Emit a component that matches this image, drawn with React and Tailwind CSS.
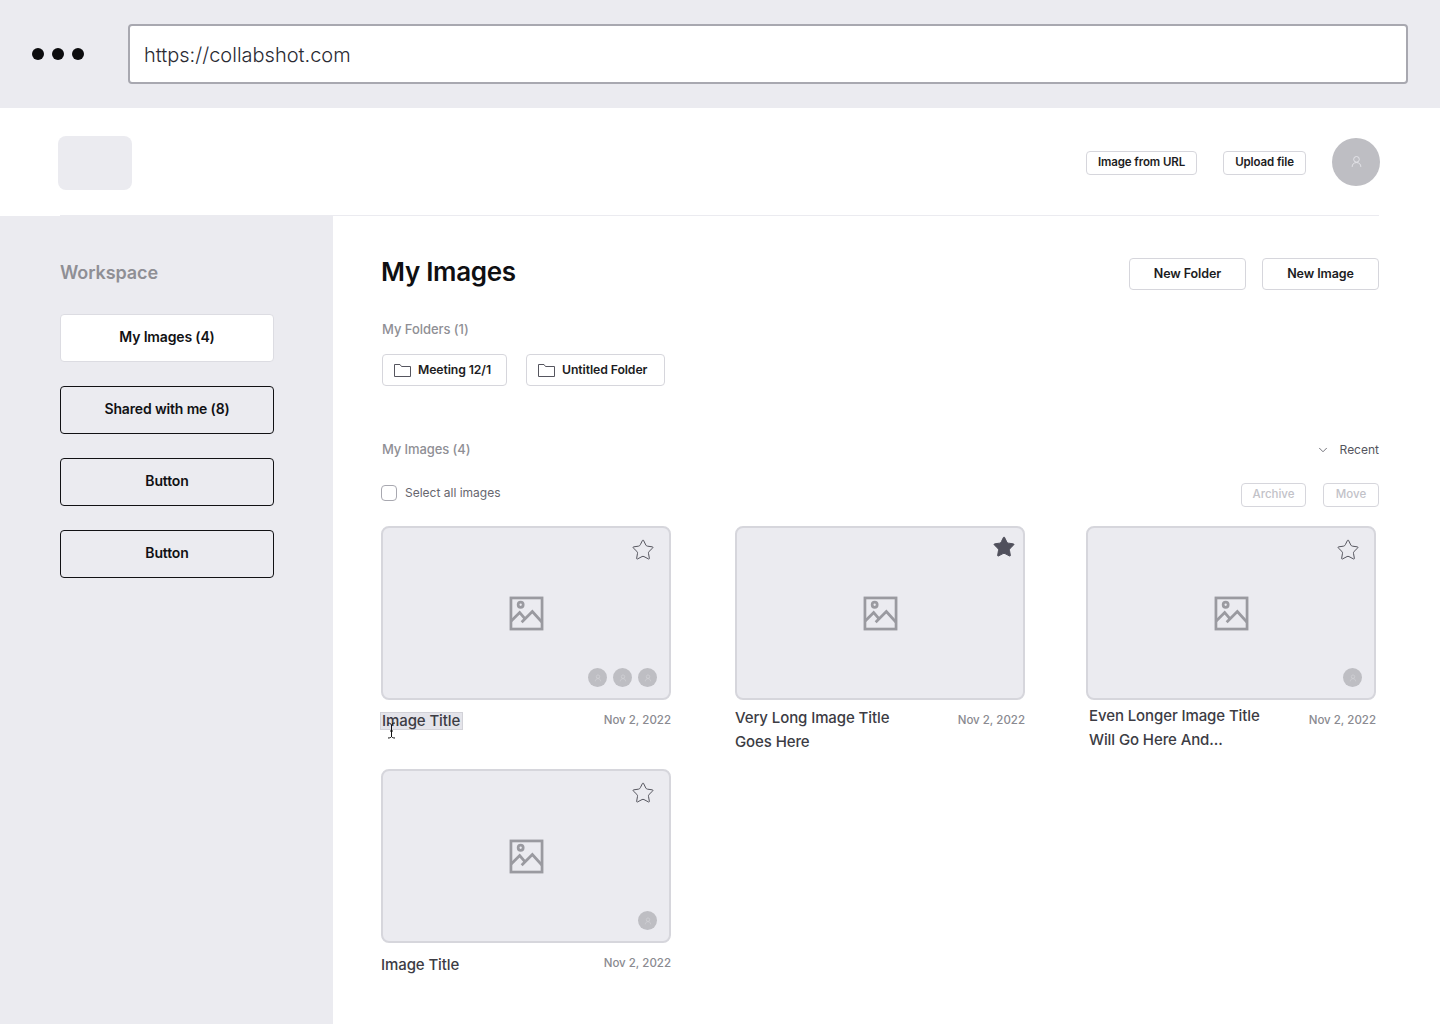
import { ChevronDown, Star } from "lucide-react";

const font = { fontFamily: "Inter, Lato, sans-serif" };

function ImageIcon() {
  return (
    <svg className="mt-[1px] ml-[1px]" width="35" height="35" viewBox="0 0 36 36" fill="none" stroke="#9a9aa0" strokeWidth="2.8">
      <rect x="2" y="2" width="32" height="32" />
      <circle cx="12" cy="9" r="2.600" />
      <path d="M2 26l9-9 6 7M13 27l11-11 10 11" />
    </svg>
  );
}

function FolderIcon() {
  return (
    <svg width="17" height="13" viewBox="0 0 17 13" fill="none" stroke="#55555e" strokeWidth="1">
      <path d="M.5.5h5.500l1.500 2h9v10H.5z" />
    </svg>
  );
}

function UserIcon({ size, color }) {
  return (
    <svg width={size} height={size} viewBox="0 0 12 12" fill="none" stroke={color} strokeWidth="0.8">
      <circle cx="6" cy="4" r="2.600" />
      <path d="M2 11c0-2.500 1.500-4 4-4s4 1.500 4 4" />
    </svg>
  );
}

function SideButton({ children, active }) {
  return (
    <button
      className={`h-12 w-[214px] rounded pb-[4px] text-[14px] font-semibold tracking-[-0.15px] text-[#111114] ${
        active ? "border border-[#dcdce2] bg-white" : "border border-[#111114]"
      }`}
    >
      {children}
    </button>
  );
}

function Card({ title, selected, starred, avatars, offset }) {
  return (
    <div className="w-[290px]">
      <div className="relative flex h-[174px] items-center justify-center rounded-lg border-2 border-[#d6d6dc] bg-[#ebebf0]">
        <ImageIcon />
        {starred ? (
          <Star size={24} className="absolute top-[7px] right-[7px]" fill="#50505c" stroke="#50505c" strokeWidth={1} />
        ) : (
          <Star size={24} className="absolute top-[10px] right-[14px]" stroke="#55555e" strokeWidth={1} />
        )}
        <div className="absolute right-[12px] bottom-[11px] flex gap-[6px]">
          {Array.from({ length: avatars }).map((_, i) => (
            <div key={i} className="flex h-[19px] w-[19px] items-center justify-center rounded-full bg-[#bebec3]">
              <UserIcon size={8} color="#d8d8dc" />
            </div>
          ))}
        </div>
      </div>
      <div className="flex items-start justify-between">
        <div className={`w-[190px] text-[15px] leading-6 font-medium tracking-[-0.1px] text-[#3c3c44] ${offset}`}>
          {selected ? (
            <span className="relative -ml-px inline-block h-[18px] border border-[#d2d2d8] bg-[#e4e4ea] pr-[2px] pl-px leading-[16px]">
              {title}
              <svg className="absolute top-[9px] left-[6px]" width="9" height="18" viewBox="0 0 9 18" fill="none" stroke="#111" strokeWidth="1">
                <path d="M1 1c2 0 3 1 3.500 2 .5-1 1.500-2 3.500-2M4.500 3v12M1 16c2 0 3-.5 3.500-1.500.5 1 1.500 1.500 3.500 1.500M3 9h3" />
              </svg>
            </span>
          ) : (
            title
          )}
        </div>
        <div className="mt-[12px] text-[11.5px] leading-4 font-medium text-[#8a8a90]">Nov 2, 2022</div>
      </div>
    </div>
  );
}

export default function App() {
  return (
    <div className="flex h-[1024px] w-[1440px] flex-col overflow-hidden bg-white" style={font}>
      <div className="flex h-[108px] items-center bg-[#ebebf0] pr-8 pl-8">
        <div className="mr-11 flex gap-2">
          <div className="h-3 w-3 rounded-full bg-[#0c0c0e]" />
          <div className="h-3 w-3 rounded-full bg-[#0c0c0e]" />
          <div className="h-3 w-3 rounded-full bg-[#0c0c0e]" />
        </div>
        <div className="flex h-[60px] flex-1 items-center rounded border-2 border-[#a8a8b0] bg-white pt-[2px] pl-[14px] text-[20px] font-light text-[#2b2b33]">
          https://collabshot.com
        </div>
      </div>

      <div className="mr-[61px] ml-[60px] flex h-[108px] items-center justify-between border-b border-[#ebebf0]">
        <div className="mt-[2px] -ml-[2px] h-[54px] w-[74px] rounded-lg bg-[#ebebf0]" />
        <div className="flex items-center">
          <button className="mt-[2px] h-6 w-[111px] rounded border border-[#d6d6dc] text-[11.5px] font-semibold tracking-[-0.1px] text-[#1c1c22]">Image from URL</button>
          <button className="mt-[2px] ml-[26px] h-6 w-[83px] rounded border border-[#d6d6dc] text-[11.5px] font-semibold tracking-[-0.1px] text-[#1c1c22]">Upload file</button>
          <div className="mr-[-1px] ml-[26px] flex h-12 w-12 items-center justify-center rounded-full bg-[#bebec3]">
            <UserIcon size={13} color="#e8e8ec" />
          </div>
        </div>
      </div>

      <div className="flex flex-1">
        <aside className="w-[333px] bg-[#ebebf0] pt-[45px] pl-[60px]">
          <div className="text-[18px] leading-6 font-semibold tracking-[-0.1px] text-[#8f8f95]">Workspace</div>
          <div className="mt-[29px] flex flex-col gap-6">
            <SideButton active>My Images (4)</SideButton>
            <SideButton>Shared with me (8)</SideButton>
            <SideButton>Button</SideButton>
            <SideButton>Button</SideButton>
          </div>
        </aside>

        <main className="w-[1046px] pt-[38px] pl-[48px]">
          <div className="flex items-center justify-between">
            <h1 className="text-[26px] leading-8 font-semibold tracking-[-0.3px] text-[#0f0f12]">My Images</h1>
            <div className="mt-[4px] flex gap-4">
              <button className="h-8 w-[117px] rounded border border-[#d6d6dc] text-[12.5px] font-semibold tracking-[-0.1px] text-[#1c1c22]">New Folder</button>
              <button className="h-8 w-[117px] rounded border border-[#d6d6dc] text-[12.5px] font-semibold tracking-[-0.1px] text-[#1c1c22]">New Image</button>
            </div>
          </div>

          <div className="mt-[31px] pl-px text-[13px] leading-4 font-medium tracking-[-0.05px] text-[#8f8f95]">My Folders (1)</div>
          <div className="mt-[17px] flex gap-[19px] pl-px">
            <div className="flex h-8 w-[125px] items-center gap-[7px] rounded border border-[#d6d6dc] pl-[11px] text-[12.25px] font-semibold tracking-[-0.1px] whitespace-nowrap text-[#1c1c22]">
              <FolderIcon />
              Meeting 12/1
            </div>
            <div className="flex h-8 w-[139px] items-center gap-[7px] rounded border border-[#d6d6dc] pl-[11px] text-[12.25px] font-semibold tracking-[-0.1px] whitespace-nowrap text-[#1c1c22]">
              <FolderIcon />
              Untitled Folder
            </div>
          </div>

          <div className="mt-[54px] flex items-center justify-between pl-px">
            <div className="text-[13px] leading-4 font-medium tracking-[-0.1px] text-[#8f8f95]">My Images (4)</div>
            <div className="flex translate-y-[1px] items-center gap-[10px] text-[12px] text-[#55555e]">
              <ChevronDown size={14} strokeWidth={1.4} />
              Recent
            </div>
          </div>

          <div className="mt-[23px] flex items-center justify-between">
            <label className="flex items-center gap-2 text-[12px] text-[#66666e]">
              <span className="h-4 w-4 rounded border border-[#a8a8b0] bg-white" />
              Select all images
            </label>
            <div className="flex translate-y-[2px] gap-[17px]">
              <button className="h-6 w-[65px] rounded border border-[#d6d6dc] text-[11.5px] font-medium text-[#c2c2c8]">Archive</button>
              <button className="h-6 w-[56px] rounded border border-[#d6d6dc] text-[11.5px] font-medium text-[#c2c2c8]">Move</button>
            </div>
          </div>

          <div className="mt-[21px] grid grid-cols-[354px_351px_290px] grid-rows-[243px_auto]">
            <Card title="Image Title" selected avatars={3} offset="mt-[9px]" />
            <Card title="Very Long Image Title Goes Here" starred avatars={0} offset="mt-[6px]" />
            <Card title="Even Longer Image Title Will Go Here And..." avatars={1} offset="mt-[4px] ml-[3px]" />
            <Card title="Image Title" avatars={1} offset="mt-[10px]" />
          </div>
        </main>
      </div>
    </div>
  );
}
